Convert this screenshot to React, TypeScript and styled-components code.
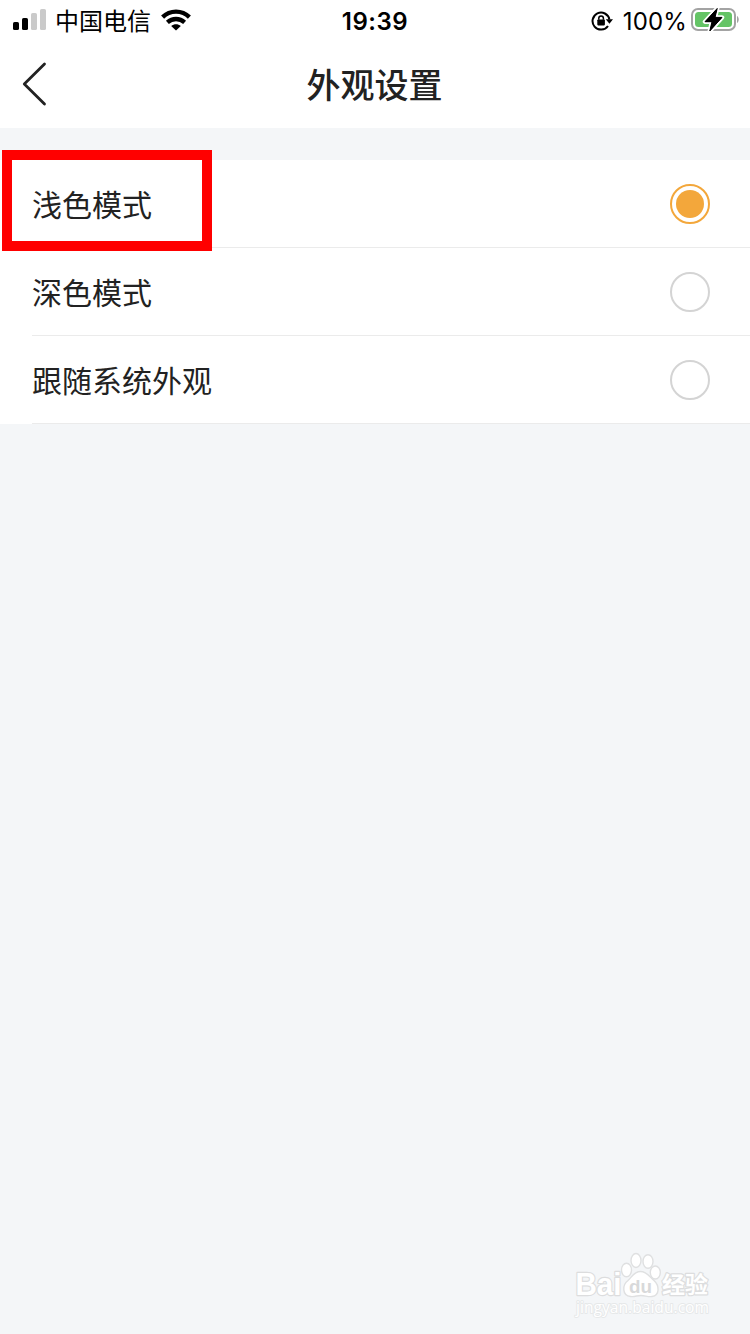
import React, { useState } from "react";
import styled, { createGlobalStyle } from "styled-components";

const GlobalStyle = createGlobalStyle`
  * { box-sizing: border-box; }
  body {
    margin: 0;
    background: #f4f6f8;
    color: #222;
    font-family: Inter, "Noto Sans CJK SC", sans-serif;
  }
`;

const Screen = styled.div`
  position: relative;
  display: flex;
  flex-direction: column;
  width: 750px;
  height: 1334px;
  overflow: hidden;
  background: #f4f6f8;
`;

const StatusBar = styled.div`
  display: grid;
  grid-template-columns: 1fr auto 1fr;
  align-items: center;
  height: 40px;
  padding: 0 11px 0 13px;
  background: #fff;
  color: #000;
  font-size: 24px;
  line-height: 36px;
`;

const StatusGroup = styled.div<{ $end?: boolean }>`
  display: flex;
  align-items: center;
  justify-content: ${(p) => (p.$end ? "flex-end" : "flex-start")};
  height: 40px;

  svg { display: block; flex: none; }
`;

const Carrier = styled.span`
  margin: 0 10px 0 8px;
  font-family: "Noto Sans CJK SC", sans-serif;
`;

const Clock = styled.div`
  padding: 4px 2px 0 0;
  font-weight: 600;
  font-size: 24px;
  letter-spacing: 0.55px;
`;

const Percent = styled.span`
  margin: 4px 4px 0 10px;
  letter-spacing: 0.15px;
`;

const NavBar = styled.header`
  display: grid;
  grid-template-columns: 100px 1fr 100px;
  align-items: center;
  height: 88px;
  background: #fff;
`;

const BackButton = styled.button`
  height: 88px;
  padding: 0 0 0 20px;
  border: 0;
  background: none;
  text-align: left;

  svg { display: block; }
`;

const Title = styled.h1`
  margin: 0;
  padding-right: 1px;
  text-align: center;
  font: 500 34px/88px "Noto Sans CJK SC", sans-serif;
`;

const OptionList = styled.div`
  margin-top: 32px;
  padding-left: 32px;
  background: #fff;
`;

const OptionRow = styled.div`
  position: relative;
  display: flex;
  align-items: center;
  justify-content: space-between;
  height: 88px;
  padding-right: 40px;
  border-bottom: 1px solid #ebebeb;
`;

const OptionLabel = styled.span`
  margin-bottom: 2px;
  font: 400 30px/86px "Noto Sans CJK SC", sans-serif;
`;

const Radio = styled.span<{ $checked: boolean }>`
  display: grid;
  place-items: center;
  width: 40px;
  height: 40px;
  margin-top: 1px;
  border: 2px solid ${(p) => (p.$checked ? "#f3a73b" : "#d4d4d4")};
  border-radius: 50%;

  &::after {
    content: "";
    width: 28px;
    height: 28px;
    border-radius: 50%;
    background: ${(p) => (p.$checked ? "#f3a73b" : "transparent")};
  }
`;

const Highlight = styled.div`
  position: absolute;
  left: -30px;
  top: -10px;
  width: 210px;
  height: 101px;
  border: 10px solid #f00;
  z-index: 1;
`;

const Watermark = styled.svg`
  position: absolute;
  left: 570px;
  top: 1246px;
`;

const SignalIcon = () => (
  <svg width="34" height="22" viewBox="0 0 34 22">
    <rect x="0" y="13" width="6" height="8" rx="1.6" />
    <rect x="9" y="9" width="6" height="12" rx="1.6" />
    <rect x="18" y="4" width="6" height="17" rx="1.6" fill="#cacaca" />
    <rect x="27" y="0" width="6" height="21" rx="1.6" fill="#cacaca" />
  </svg>
);

const WifiIcon = () => (
  <svg width="30" height="22" viewBox="0 0 30 22">
    <g fill="none" stroke="#000" strokeWidth="4.3">
      <path d="M1.6 8.1C9 .8 21 .8 28.4 8.1" />
      <path d="M6.4 13.3C11.3 8.9 18.7 8.9 23.6 13.3" />
    </g>
    <path d="M10.2 17.1C13 14.5 17 14.5 19.8 17.1L15 21.6Z" />
  </svg>
);

const RotationLockIcon = () => (
  <svg width="22" height="22" viewBox="0 0 22 22">
    <path d="M17 17A8.5 8.5 0 1 1 18.4 10.5" fill="none" stroke="#000" strokeWidth="2" />
    <path d="M14.8 10.2H22L18.4 14.8Z" />
    <rect x="6.3" y="10.4" width="7.6" height="6" rx="0.8" />
    <path d="M7.8 10.8V9.2a2.3 2.3 0 0 1 4.6 0V10.8" fill="none" stroke="#000" strokeWidth="1.5" />
  </svg>
);

const BatteryIcon = () => (
  <svg width="48" height="28" viewBox="0 0 48 28">
    <rect x="1" y="3" width="43" height="21" rx="6" fill="#fff" stroke="#a3a3a3" strokeWidth="2" />
    <rect x="4" y="6" width="37" height="15" rx="3.5" fill="#65c466" />
    <path d="M46 10c2.3 1.3 2.3 5.7 0 7z" fill="#a3a3a3" />
    <path
      d="M26.2 2.5 14 15.7H21L18.8 25 31 11.4H24Z"
      fill="#000"
      stroke="#fff"
      strokeWidth="4.5"
      strokeLinejoin="round"
      paintOrder="stroke"
    />
    <path d="M26.2 2.5 14 15.7H21L18.8 25 31 11.4H24Z" stroke="#000" strokeLinejoin="round" />
  </svg>
);

const BaiduWatermark = () => (
  <Watermark width="150" height="76" viewBox="0 0 150 76">
    <g fill="#fff" stroke="#dfe0e1" strokeWidth="1.4">
      <ellipse cx="56.5" cy="24" rx="5" ry="6.8" />
      <ellipse cx="66" cy="14.5" rx="5" ry="7" />
      <ellipse cx="78" cy="15.5" rx="5" ry="6.8" />
      <ellipse cx="85.3" cy="26.5" rx="5" ry="6.5" />
      <path d="M70.5 25.5C64 25.5 62 31 58 34.5C52 39 52 49.5 60.5 50.5C65 51 67 49.5 71 49.5C75 49.5 78 51 82 50.5C90 49.5 89.5 39.5 84 34.5C79.5 31 77 25.5 70.5 25.5Z" />
    </g>
    <g fill="#fff" stroke="#dcddde" strokeWidth="2.4" paintOrder="stroke" strokeLinejoin="round">
      <text x="5.5" y="49" fontFamily="Liberation Sans, sans-serif" fontWeight="700" fontSize="31" textLength="46" lengthAdjust="spacingAndGlyphs">Bai</text>
      <text x="92" y="47" fontFamily="Noto Sans CJK SC, sans-serif" fontWeight="700" fontSize="23" textLength="46" lengthAdjust="spacingAndGlyphs">经验</text>
      <text x="6" y="67" fontFamily="Open Sans, sans-serif" fontSize="15.5" strokeWidth="1.8" stroke="#e6e8e9" textLength="133" lengthAdjust="spacingAndGlyphs">jingyan.baidu.com</text>
    </g>
    <text x="59" y="46.5" fill="#d8d9da" fontFamily="Liberation Sans, sans-serif" fontWeight="700" fontSize="19" textLength="23" lengthAdjust="spacingAndGlyphs">du</text>
  </Watermark>
);

const OPTIONS = ["浅色模式", "深色模式", "跟随系统外观"];

export default function App() {
  const [selected, setSelected] = useState(0);
  return (
    <>
      <GlobalStyle />
      <Screen>
        <StatusBar>
          <StatusGroup>
            <SignalIcon />
            <Carrier>中国电信</Carrier>
            <WifiIcon />
          </StatusGroup>
          <Clock>19:39</Clock>
          <StatusGroup $end>
            <RotationLockIcon />
            <Percent>100%</Percent>
            <BatteryIcon />
          </StatusGroup>
        </StatusBar>
        <NavBar>
          <BackButton aria-label="返回">
            <svg width="28" height="46" viewBox="0 0 28 46">
              <path d="M24.5 3 4.3 23 24.5 43" fill="none" stroke="#222" strokeWidth="2.8" strokeLinecap="round" strokeLinejoin="round" />
            </svg>
          </BackButton>
          <Title>外观设置</Title>
        </NavBar>
        <OptionList role="radiogroup">
          {OPTIONS.map((label, i) => (
            <OptionRow key={label} role="radio" aria-checked={i === selected} onClick={() => setSelected(i)}>
              {i === 0 && <Highlight />}
              <OptionLabel>{label}</OptionLabel>
              <Radio $checked={i === selected} />
            </OptionRow>
          ))}
        </OptionList>
        <BaiduWatermark />
      </Screen>
    </>
  );
}
